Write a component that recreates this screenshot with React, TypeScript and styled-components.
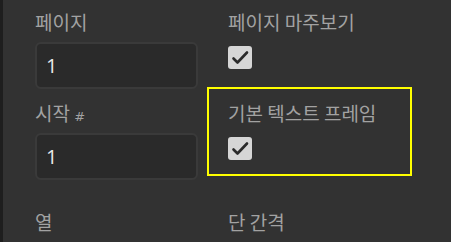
import styled, { createGlobalStyle } from 'styled-components';

const GlobalStyle = createGlobalStyle`
  html, body {
    margin: 0;
    padding: 0;
    background: #323232;
    overflow: hidden;
  }
  body {
    font-family: "Noto Sans CJK KR", "Noto Sans", sans-serif;
  }
`;

const CheckIcon = () => (
  <svg width="24" height="23" viewBox="0 0 24 23" fill="none">
    <path d="M5.5 12.5 L9.5 16.5 L19 6.5" stroke="#2a2a2a" strokeWidth="2.6" strokeLinecap="round" strokeLinejoin="round" />
  </svg>
);

const App = () => {
  return (
    <S.Page>
      <GlobalStyle />
      <S.Strip />
      <S.Panel>
        <S.Grid>
          <S.Field>
            <S.Label>페이지</S.Label>
            <S.Input defaultValue="1" />
          </S.Field>
          <S.Field>
            <S.Label>페이지 마주보기</S.Label>
            <S.Checkbox>
              <CheckIcon />
            </S.Checkbox>
          </S.Field>
          <S.Field>
            <S.Label>
              시작 <S.Hash>#</S.Hash>
            </S.Label>
            <S.Input defaultValue="1" />
          </S.Field>
          <S.Field $highlight>
            <S.Label>기본 텍스트 프레임</S.Label>
            <S.Checkbox>
              <CheckIcon />
            </S.Checkbox>
          </S.Field>
        </S.Grid>
        <S.Divider />
        <S.Grid $tight>
          <S.Field>
            <S.Label>열</S.Label>
            <S.Input defaultValue="" />
          </S.Field>
          <S.Field>
            <S.Label>단 간격</S.Label>
            <S.Input defaultValue="" $width={143} />
          </S.Field>
        </S.Grid>
      </S.Panel>
    </S.Page>
  );
};

const S = {
  Page: styled.div`
    display: flex;
    width: 451px;
    height: 242px;
    overflow: hidden;
    background: #323232;
  `,

  Strip: styled.div`
    flex: 0 0 3px;
    background: #1e1e1e;
  `,

  Panel: styled.div`
    flex: 1;
    display: flex;
    flex-direction: column;
    padding: 10px 18px 0 32px;
  `,

  Grid: styled.div<{ $tight?: boolean }>`
    display: grid;
    grid-template-columns: 163px 1fr;
    column-gap: 30px;
    row-gap: 12px;
    margin-top: ${({ $tight }) => ($tight ? '14px' : '0')};
  `,

  Field: styled.div<{ $highlight?: boolean }>`
    position: relative;
    display: flex;
    flex-direction: column;
    align-items: flex-start;

    ${({ $highlight }) =>
      $highlight &&
      `
      &::before {
        content: '';
        position: absolute;
        top: -14px;
        left: -21px;
        right: 21px;
        bottom: 4px;
        border: 2px solid #ffff00;
        pointer-events: none;
      }
    `}
  `,

  Label: styled.div`
    height: 24px;
    font-size: 19px;
    line-height: 24px;
    color: #a2a2a2;
    white-space: nowrap;
  `,

  Hash: styled.span`
    font-family: "DejaVu Sans", sans-serif;
    font-size: 13px;
  `,

  Input: styled.input<{ $width?: number }>`
    box-sizing: border-box;
    width: ${({ $width }) => ($width ? `${$width}px` : '100%')};
    height: 47px;
    margin-top: 8px;
    padding: 0 0 0 9px;
    border: 2px solid #3a3a3a;
    border-radius: 6px;
    outline: none;
    background: #2a2a2a;
    color: #e8e8e8;
    font-family: "Open Sans", "Noto Sans", sans-serif;
    font-size: 20px;
  `,

  Checkbox: styled.div`
    display: flex;
    align-items: center;
    justify-content: center;
    width: 24px;
    height: 23px;
    margin-top: 12px;
    border-radius: 3px;
    background: #d6d6d6;
  `,

  Divider: styled.div`
    height: 2px;
    margin: 16px 0 0 -1px;
    background: #3b3b3b;
  `,
};

export default App;
